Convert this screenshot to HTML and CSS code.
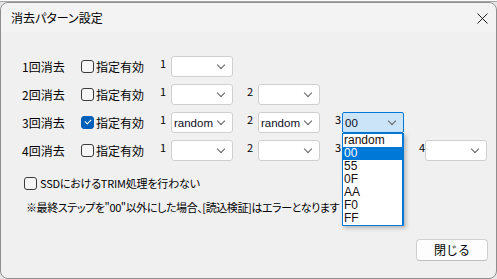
FILE: index.html
```html
<!DOCTYPE html>
<html lang="ja">
  <head>
    <meta charset="UTF-8" />
    <title>消去パターン設定</title>
    <link rel="stylesheet" href="styles.css">
  </head>
  <body>
    <div class="behind"></div>
    <div class="dialog">
      <div class="titlebar">
        <span class="title">消去パターン設定</span>
        <svg class="close" width="11" height="11" viewBox="0 0 11 11">
          <path d="M0.5 0.5 L10.5 10.5 M10.5 0.5 L0.5 10.5" stroke="#1a1a1a" stroke-width="1" fill="none" />
        </svg>
      </div>

      <div class="content">
        <div class="passes">
          <div class="pass">
            <span class="pass-name">1回消去</span>
            <label class="check"><span class="box"></span>指定有効</label>
            <div class="pick p1"><span class="num">1</span><div class="combo"><span class="value"></span><i class="chev"></i></div></div>
          </div>

          <div class="pass">
            <span class="pass-name">2回消去</span>
            <label class="check"><span class="box"></span>指定有効</label>
            <div class="pick p1"><span class="num">1</span><div class="combo"><span class="value"></span><i class="chev"></i></div></div>
            <div class="pick p2"><span class="num">2</span><div class="combo"><span class="value"></span><i class="chev"></i></div></div>
          </div>

          <div class="pass">
            <span class="pass-name">3回消去</span>
            <label class="check"><span class="box checked"></span>指定有効</label>
            <div class="pick p1"><span class="num">1</span><div class="combo"><span class="value">random</span><i class="chev"></i></div></div>
            <div class="pick p2"><span class="num">2</span><div class="combo"><span class="value">random</span><i class="chev"></i></div></div>
            <div class="pick p3">
              <span class="num tight">3</span>
              <div class="combo open"><span class="value">00</span><i class="chev"></i>
                <ul class="dropdown">
                  <li>random</li>
                  <li class="selected">00</li>
                  <li>55</li>
                  <li>0F</li>
                  <li>AA</li>
                  <li>F0</li>
                  <li>FF</li>
                </ul>
              </div>
            </div>
          </div>

          <div class="pass">
            <span class="pass-name">4回消去</span>
            <label class="check"><span class="box"></span>指定有効</label>
            <div class="pick p1"><span class="num">1</span><div class="combo"><span class="value"></span><i class="chev"></i></div></div>
            <div class="pick p2"><span class="num">2</span><div class="combo"><span class="value"></span><i class="chev"></i></div></div>
            <div class="pick p3 under"><span class="num tight">3</span><div class="combo"><span class="value"></span><i class="chev"></i></div></div>
            <div class="pick p4"><span class="num tiny">4</span><div class="combo"><span class="value"></span><i class="chev"></i></div></div>
          </div>
        </div>

        <label class="check trim"><span class="box"></span>SSDにおけるTRIM処理を行わない</label>

        <p class="note">※最終ステップを"00"以外にした場合、[読込検証]はエラーとなります</p>

        <div class="actions">
          <button class="close-button">閉じる</button>
        </div>
      </div>
    </div>
  </body>
</html>
```

FILE: styles.css
```css
html,
body {
  margin: 0;
}

body {
  background: #e6e6e6;
  font-family: "Noto Sans CJK JP", sans-serif;
  font-size: 12px;
  color: #000;
  overflow: hidden;
}

/* window lying behind the dialog */
.behind {
  height: 1px;
  background: #fafafa;
  border-bottom: 1px solid #a6a6a6;
}

.dialog {
  width: 497px;
  height: 277px;
  box-sizing: border-box;
  background: #f0f0f0;
  border: 1px solid #8e8e8e;
  border-radius: 8px;
}

.titlebar {
  height: 29px;
  background: #f3f3f3;
  border-radius: 8px 8px 0 0;
  display: flex;
  align-items: center;
  justify-content: space-between;
  padding: 0 8px 0 10px;
}

.title {
  font-size: 12px;
  line-height: 14px;
  font-feature-settings: "palt";
  padding-top: 1px;
}

.close {
  display: block;
  margin-top: 1px;
}

.content {
  padding: 24px 8px 0 21px;
}

.passes {
  display: flex;
  flex-direction: column;
  gap: 7px;
}

.pass {
  display: grid;
  grid-template-columns: 59px 79px 87px 88px 84px auto;
  height: 21px;
  align-items: center;
}

.pass-name {
  line-height: 14px;
  padding-top: 1px;
}

.check {
  display: flex;
  align-items: center;
  gap: 2px;
  line-height: 14px;
}

.box {
  width: 11px;
  height: 11px;
  border: 1px solid #3a3a3a;
  border-radius: 3px;
  background: #f6f6f6;
  position: relative;
}

.box.checked {
  background: #005fb8;
  border-color: #005fb8;
}

.box.checked::after {
  content: "";
  position: absolute;
  left: 3px;
  top: 2px;
  width: 5px;
  height: 3px;
  border-left: 1px solid #fff;
  border-bottom: 1px solid #fff;
  transform: rotate(-45deg);
}

.pick {
  display: flex;
  align-items: flex-start;
  height: 21px;
}

.pick .num {
  width: 11px;
  font-size: 11px;
  line-height: 13px;
  padding-top: 1px;
}

.pick .num.tight {
  width: 7px;
}

.pick .num.tiny {
  width: 6px;
}

.combo {
  position: relative;
  width: 62px;
  height: 21px;
  box-sizing: border-box;
  background: #fff;
  border: 1px solid #cfcfcf;
  border-radius: 3px;
  display: flex;
  align-items: center;
  padding-left: 2px;
}

.combo .value {
  flex: 1;
  font-family: "Liberation Sans", sans-serif;
  font-size: 11.5px;
  line-height: 14px;
  color: #0d0d26;
}

.chev {
  width: 5px;
  height: 5px;
  border-right: 1px solid #606060;
  border-bottom: 1px solid #606060;
  transform: rotate(45deg);
  margin: 0 8px 3px 0;
}

.combo.open {
  background: #cce4f7;
  border-color: #0078d7;
  border-radius: 2px;
}

.dropdown {
  position: absolute;
  left: -1px;
  top: 20px;
  width: 62px;
  box-sizing: border-box;
  margin: 0;
  padding: 0;
  list-style: none;
  background: #fff;
  border: 1px solid #0078d7;
  border-right-width: 2px;
  box-shadow: 2px 2px 4px rgba(0, 0, 0, 0.25);
  z-index: 2;
}

.dropdown li {
  height: 13px;
  line-height: 13px;
  padding-left: 1px;
  font-family: "Liberation Sans", sans-serif;
  font-size: 12px;
  color: #1a0f0f;
}

.dropdown li.selected {
  background: #0078d7;
  color: #fff;
}

.trim {
  margin: 15px 0 0 2px;
  gap: 3px;
  font-size: 11px;
  font-feature-settings: "palt";
  letter-spacing: -0.2px;
}

.note {
  margin: 10px 0 0 4px;
  font-size: 11px;
  line-height: 14px;
  font-feature-settings: "palt";
  letter-spacing: -0.4px;
  white-space: nowrap;
}

.actions {
  display: flex;
  justify-content: flex-end;
  margin-top: 25px;
}

.close-button {
  width: 72px;
  height: 22px;
  background: #fdfdfd;
  border: 1px solid #d0d0d0;
  border-bottom-color: #bdbdbd;
  border-radius: 4px;
  font-family: "Noto Sans CJK JP", sans-serif;
  font-size: 12px;
  line-height: 14px;
  color: #000;
  padding: 0;
  margin-right: 0;
}
```
